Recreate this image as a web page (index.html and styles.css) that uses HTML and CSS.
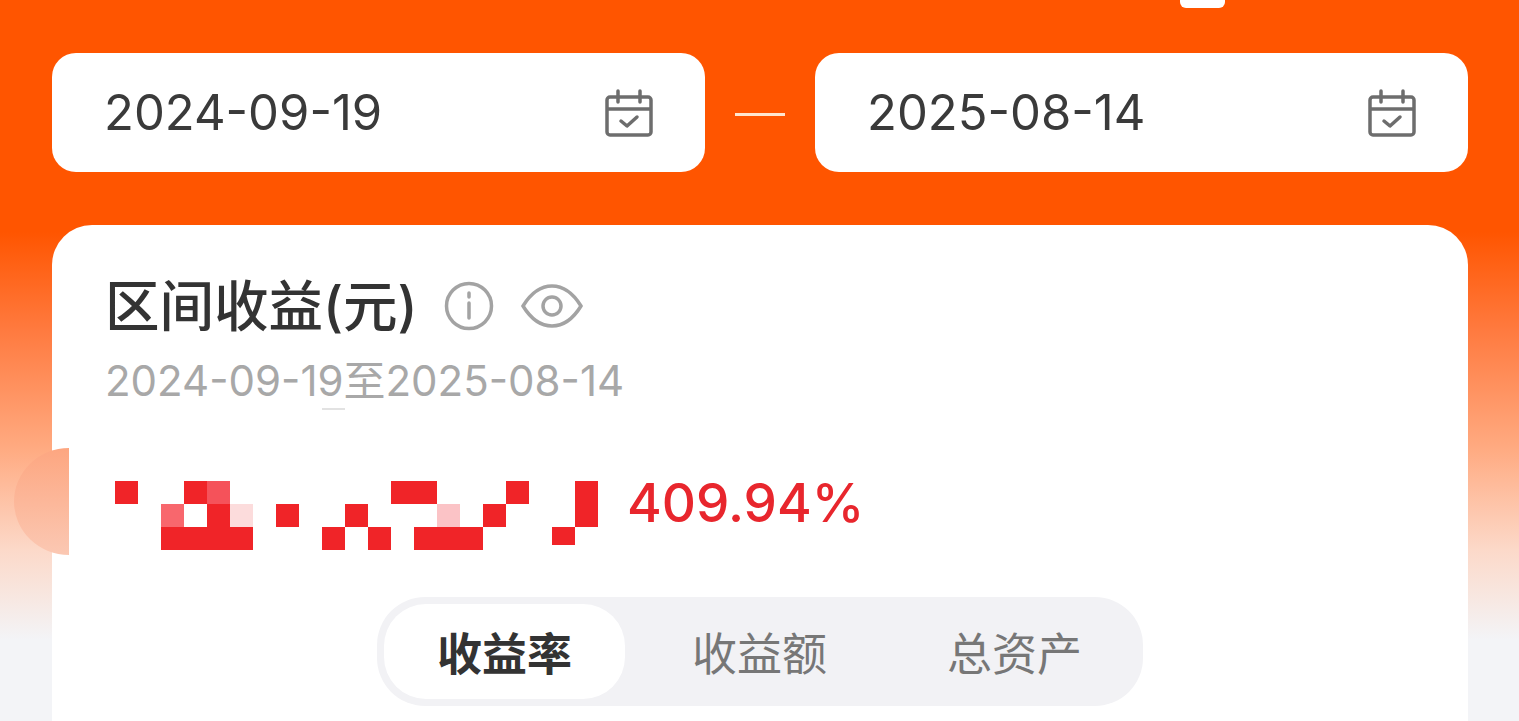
FILE: index.html
```html
<!DOCTYPE html>
<html lang="zh-CN">
<head>
  <meta charset="UTF-8">
  <title>区间收益</title>
  <link rel="stylesheet" href="styles.css">
</head>
<body>
  <div class="top-pill"></div>
  <div class="date-row">
    <div class="date-box">
      <span>2024-09-19</span>
      <svg class="cal-icon" viewBox="0 0 50 50"><path d="M6 9h38a3 3 0 0 1 3 3v32a3 3 0 0 1-3 3H6a3 3 0 0 1-3-3V12a3 3 0 0 1 3-3zM3 21h44M14 3v11M36 3v11M17 33l6 5 10-9"/></svg>
    </div>
    <div class="dash"></div>
    <div class="date-box">
      <span>2025-08-14</span>
      <svg class="cal-icon" viewBox="0 0 50 50"><path d="M6 9h38a3 3 0 0 1 3 3v32a3 3 0 0 1-3 3H6a3 3 0 0 1-3-3V12a3 3 0 0 1 3-3zM3 21h44M14 3v11M36 3v11M17 33l6 5 10-9"/></svg>
    </div>
  </div>

  <div class="section">
    <div class="blob"></div>
    <div class="title-row">
      <h1>区间收益(元)</h1>
      <svg class="info-icon" viewBox="0 0 50 50"><circle cx="25" cy="25" r="22.5"/><path d="M25 22v15M25 12v4"/></svg>
      <svg class="eye-icon" viewBox="0 0 62 46"><path d="M2 23C10 10 20 3 31 3s21 7 29 20c-8 13-18 20-29 20S10 36 2 23z"/><circle cx="31" cy="23" r="9"/></svg>
    </div>
    <div class="range">2024-09-19至2025-08-14<span class="range-mark"></span></div>
    <div class="amount-row">
      <svg class="mosaic" width="483" height="69" viewBox="0 0 21 3" shape-rendering="crispEdges">
        <g fill="#f02428">
          <rect x="0" y="0" width="1" height="1"/>
          <rect x="3" y="0" width="1" height="1"/>
          <rect x="4" y="1" width="1" height="1"/>
          <rect x="2" y="2" width="4" height="1"/>
          <rect x="7" y="1" width="1" height="1"/>
          <rect x="10" y="1" width="1" height="1"/>
          <rect x="9" y="2" width="1" height="1"/>
          <rect x="11" y="2" width="1" height="1"/>
          <rect x="12" y="0" width="2" height="1"/>
          <rect x="13" y="2" width="3" height="1"/>
          <rect x="16" y="1" width="1" height="1"/>
          <rect x="17" y="0" width="1" height="1"/>
          <rect x="20" y="0" width="1" height="2"/>
          <rect x="19" y="2" width="1" height="0.8"/>
        </g>
        <rect x="4" y="0" width="1" height="1" fill="#f5525a"/>
        <rect x="2" y="1" width="1" height="1" fill="#f8676d"/>
        <rect x="5" y="1" width="1" height="1" fill="#fcdcdc"/>
        <rect x="14" y="1" width="1" height="1" fill="#fbc3c6"/>
      </svg>
      <span class="percent">409.94%</span>
    </div>
    <div class="tabs">
      <div class="tab active">收益率</div>
      <div class="tab">收益额</div>
      <div class="tab">总资产</div>
    </div>
  </div>
</body>
</html>
```

FILE: styles.css
```css
body {
  margin: 0;
  height: 721px;
  overflow: hidden;
  position: relative;
  box-sizing: border-box;
  padding: 53px 51px 0 52px;
  font-family: Inter, "Noto Sans CJK SC", sans-serif;
  color: #333;
  background: linear-gradient(180deg, #ff5500 0, #ff5500 232px, #ff7a3f 330px, #ffab82 450px, #fcd9c9 550px, #f3f4f7 640px, #f3f4f7 100%);
}
.top-pill {
  position: absolute;
  left: 1180px;
  top: -6px;
  width: 45px;
  height: 14px;
  background: #fff;
  border-radius: 6px;
}
.date-row {
  display: flex;
  align-items: center;
  justify-content: space-between;
}
.date-box {
  width: 653px;
  height: 119px;
  box-sizing: border-box;
  padding: 0 51px 0 52px;
  background: white;
  border-radius: 24px;
  display: flex;
  align-items: center;
  justify-content: space-between;
  font-size: 49px;
  color: #3a3a3a;
}
.cal-icon {
  width: 50px;
  height: 50px;
  fill: none;
  stroke: #6d6d6d;
  stroke-width: 3.5;
  stroke-linecap: round;
  stroke-linejoin: round;
}
.dash {
  width: 50px;
  height: 3px;
  margin-top: 3px;
  background: #ffe6cf;
}
.section {
  position: relative;
  margin-top: 53px;
  height: 496px;
  box-sizing: border-box;
  padding: 49px 53px 0;
  background: white;
  border-radius: 40px 40px 0 0;
}
.blob {
  position: absolute;
  left: -38px;
  top: 223px;
  width: 55px;
  height: 107px;
  background: linear-gradient(180deg, #fda680, #fbc8b3);
  border-radius: 100% 0 0 100% / 50% 0 0 50%;
}
.title-row {
  display: flex;
  align-items: center;
  height: 64px;
}
h1 {
  margin: 0;
  font-size: 54.5px;
  font-weight: 500;
  line-height: 64px;
  color: #333;
}
.info-icon {
  width: 50px;
  height: 50px;
  margin-left: 26px;
  fill: none;
  stroke: #a3a3a3;
  stroke-width: 3.5;
  stroke-linecap: round;
}
.eye-icon {
  width: 62px;
  height: 46px;
  margin-left: 27px;
  fill: none;
  stroke: #a3a3a3;
  stroke-width: 3.5;
}
.range {
  position: relative;
  margin-top: 20px;
  font-size: 42px;
  line-height: 46px;
  color: #a8a8a8;
}
.range-mark {
  position: absolute;
  left: 217px;
  bottom: -6px;
  width: 23px;
  height: 2px;
  background: #e2e2e2;
}
.amount-row {
  display: flex;
  align-items: flex-start;
  margin-top: 77px;
  margin-left: 10px;
}
.mosaic {
  display: block;
}
.percent {
  margin-left: 29px;
  font-size: 53px;
  font-weight: 500;
  color: #e8262d;
  line-height: 44px;
}
.tabs {
  display: flex;
  gap: 14px;
  width: 766px;
  height: 109px;
  box-sizing: border-box;
  padding: 7px;
  margin: 47px 0 0 272px;
  background: #f2f2f5;
  border-radius: 48px;
}
.tab {
  width: 241px;
  display: flex;
  align-items: center;
  justify-content: center;
  border-radius: 42px;
  font-size: 45px;
  color: #777;
}
.tab.active {
  background: white;
  color: #333;
  font-weight: 600;
}
```
